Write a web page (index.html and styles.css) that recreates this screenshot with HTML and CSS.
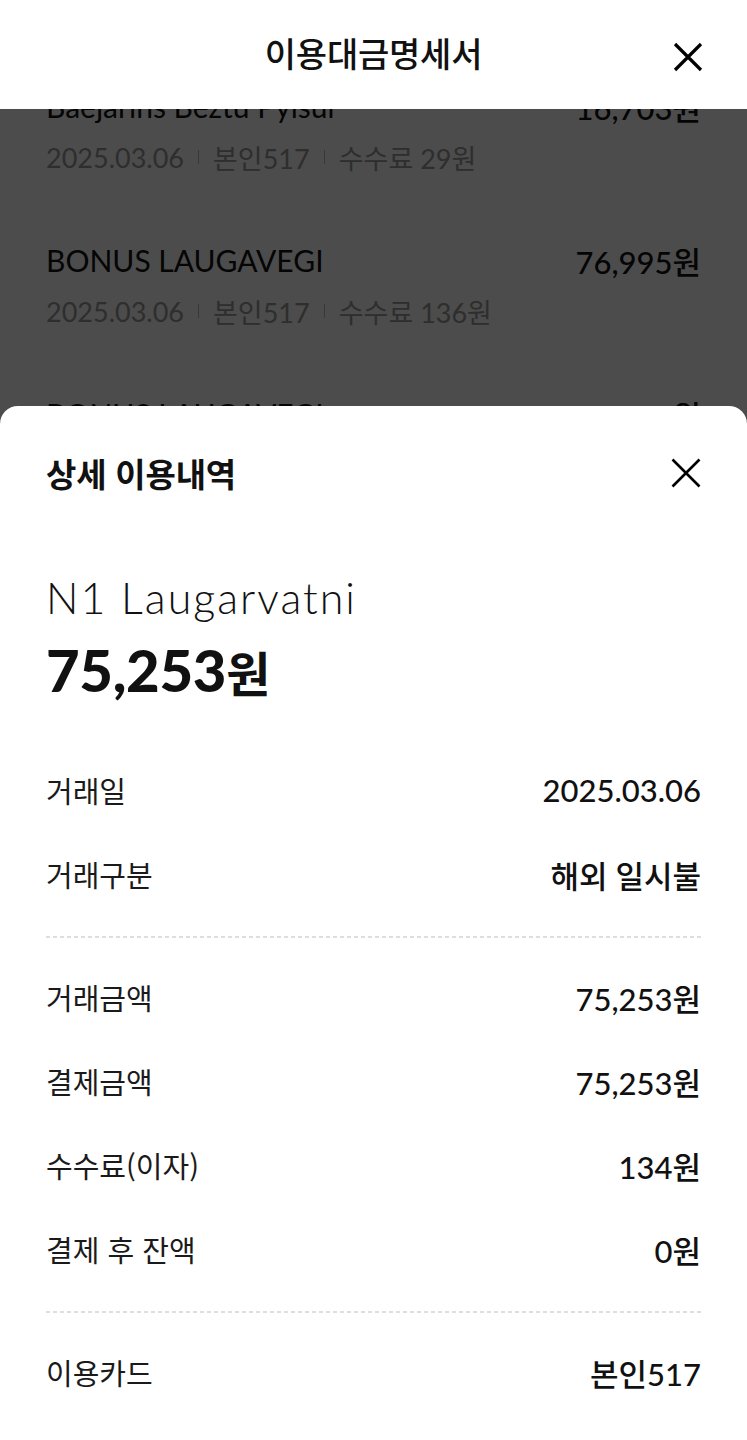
FILE: index.html
```html
<!DOCTYPE html>
<html lang="ko">
<head>
<meta charset="utf-8">
<title>이용대금명세서</title>
<link rel="stylesheet" href="styles.css">
</head>
<body>
<div class="page">
  <header class="topbar">
    <h1 class="topbar-title">이용대금명세서</h1>
    <button class="icon-btn topbar-close" aria-label="닫기">
      <svg viewBox="0 0 30 30" width="30" height="30"><path d="M2 2 L28 28 M28 2 L2 28" stroke="#000" stroke-width="3.2" fill="none"/></svg>
    </button>
  </header>
  <main class="content">
    <ul class="tx-list">
      <li class="tx">
        <div class="tx-line"><span class="tx-name">Baejarins Beztu Pylsur</span><span class="tx-amt">16,703원</span></div>
        <div class="tx-meta"><span>2025.03.06</span><i class="sep"></i><span>본인517</span><i class="sep"></i><span>수수료 29원</span></div>
      </li>
      <li class="tx">
        <div class="tx-line"><span class="tx-name">BONUS LAUGAVEGI</span><span class="tx-amt">76,995원</span></div>
        <div class="tx-meta"><span>2025.03.06</span><i class="sep"></i><span>본인517</span><i class="sep"></i><span>수수료 136원</span></div>
      </li>
      <li class="tx">
        <div class="tx-line"><span class="tx-name">BONUS LAUGAVEGI</span><span class="tx-amt">14,319원</span></div>
        <div class="tx-meta"><span>2025.03.06</span><i class="sep"></i><span>본인517</span><i class="sep"></i><span>수수료 26원</span></div>
      </li>
    </ul>
    <div class="dim"></div>
  </main>
  <section class="sheet">
    <div class="sheet-head">
      <h2 class="sheet-title">상세 이용내역</h2>
      <button class="icon-btn" aria-label="닫기">
        <svg viewBox="0 0 30 30" width="30" height="30"><path d="M1.5 1.5 L28.5 28.5 M28.5 1.5 L1.5 28.5" stroke="#000" stroke-width="2.6" fill="none"/></svg>
      </button>
    </div>
    <div class="summary">
      <div class="merchant">N1 Laugarvatni</div>
      <div class="total">75,253<span class="won">원</span></div>
    </div>
    <dl class="rows">
      <div class="row"><dt>거래일</dt><dd>2025.03.06</dd></div>
      <div class="row"><dt>거래구분</dt><dd>해외 일시불</dd></div>
      <div class="divider"></div>
      <div class="row"><dt>거래금액</dt><dd>75,253원</dd></div>
      <div class="row"><dt>결제금액</dt><dd>75,253원</dd></div>
      <div class="row"><dt>수수료(이자)</dt><dd>134원</dd></div>
      <div class="row"><dt>결제 후 잔액</dt><dd>0원</dd></div>
      <div class="divider"></div>
      <div class="row"><dt>이용카드</dt><dd>본인517</dd></div>
    </dl>
  </section>
</div>
</body>
</html>
```

FILE: styles.css
```css
* { box-sizing: border-box; }
html, body {
  margin: 0;
  padding: 0;
  background: #fff;
}
body {
  font-family: Lato, "Noto Sans CJK KR", sans-serif;
  color: #111;
  width: 747px;
  height: 1440px;
  overflow: hidden;
}
.page {
  position: relative;
  width: 747px;
  height: 1440px;
  overflow: hidden;
  display: flex;
  flex-direction: column;
}
.topbar {
  height: 109px;
  flex: none;
  display: flex;
  align-items: center;
  justify-content: center;
  position: relative;
  background: #fff;
}
.topbar-title {
  margin: 0 0 4px;
  font-family: "Noto Sans CJK KR", sans-serif;
  font-size: 34px;
  font-weight: 500;
  letter-spacing: -0.2px;
  line-height: 1;
}
.icon-btn {
  border: 0;
  background: none;
  padding: 0;
  width: 30px;
  height: 30px;
  display: flex;
}
.topbar-close {
  position: absolute;
  right: 44px;
  top: 42px;
}
.content {
  position: relative;
  flex: 1;
  overflow: hidden;
}
.tx-list {
  list-style: none;
  margin: -55px 0 0;
  padding: 0 46px;
}
.tx {
  padding: 32px 0 33px;
}
.tx-line {
  display: flex;
  justify-content: space-between;
  align-items: center;
  height: 40px;
  font-size: 30px;
  color: #111;
}
.tx-amt { font-weight: 500; font-size: 31px; }
.tx-meta {
  margin-top: 13px;
  height: 36px;
  display: flex;
  align-items: center;
  font-size: 27px;
  color: #9a9a9a;
}
.sep {
  display: inline-block;
  width: 1px;
  height: 14px;
  background: #bbb;
  margin: 0 14px;
}
.dim {
  position: absolute;
  inset: 0;
  background: rgba(0, 0, 0, 0.7);
}
.sheet {
  position: absolute;
  left: 0;
  right: 0;
  top: 406px;
  bottom: 0;
  background: #fff;
  border-radius: 18px 18px 0 0;
  padding: 0 46px;
}
.sheet-head {
  height: 134px;
  display: flex;
  align-items: center;
  justify-content: space-between;
}
.sheet-title {
  margin: 0;
  font-family: "Noto Sans CJK KR", sans-serif;
  font-size: 33px;
  font-weight: 700;
  letter-spacing: -0.2px;
}
.summary {
  margin-top: 32px;
}
.merchant {
  height: 52px;
  line-height: 52px;
  font-size: 43px;
  font-weight: 300;
  letter-spacing: 2px;
  color: #111;
}
.total {
  margin-top: 14px;
  height: 64px;
  line-height: 64px;
  font-size: 58px;
  font-weight: 900;
  letter-spacing: -0.3px;
}
.won {
  font-family: "Noto Sans CJK KR", sans-serif;
  font-size: 48px;
  font-weight: 700;
}
.rows {
  margin: 46px 0 0;
}
.row {
  height: 84px;
  display: flex;
  justify-content: space-between;
  align-items: center;
}
.row dt {
  font-family: "Noto Sans CJK KR", sans-serif;
  font-size: 29px;
  color: #1a1a1a;
}
.row dd {
  margin: 0;
  font-size: 31px;
  font-weight: 500;
  color: #111;
}
.divider {
  margin: 20px 0 17px;
  height: 2px;
  background: repeating-linear-gradient(to right, #dedede 0 4px, transparent 4px 7px);
}
```
